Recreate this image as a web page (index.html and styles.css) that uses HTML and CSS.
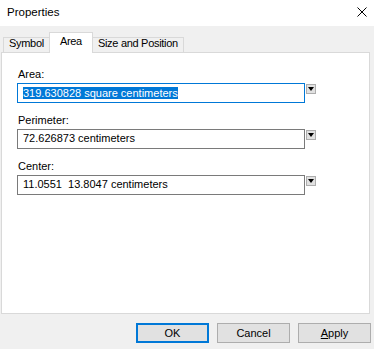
FILE: index.html
```html
<!DOCTYPE html>
<html lang="en">
<head>
    <meta charset="UTF-8">
    <meta name="viewport" content="width=device-width, initial-scale=1.0">
    <title>Properties</title>
    <link rel="stylesheet" href="styles.css">
</head>
<body>
    <div class="window">
        <!-- title bar -->
        <div class="titlebar">
            <span class="title">Properties</span>
            <svg class="close" width="10" height="10" viewBox="0 0 10 10">
                <path d="M0.5 0.5 L9.5 9.5 M9.5 0.5 L0.5 9.5" stroke="#000" stroke-width="1" fill="none"/>
            </svg>
        </div>

        <!-- tabs -->
        <div class="tabs">
            <div class="tab">Symbol</div>
            <div class="tab active">Area</div>
            <div class="tab">Size and Position</div>
        </div>

        <!-- panel with the fields -->
        <div class="panel">
            <div class="field">
                <label>Area:</label>
                <div class="row">
                    <div class="input focused"><span class="selected">319.630828 square centimeters</span></div>
                    <div class="drop"><span class="arrow"></span></div>
                </div>
            </div>
            <div class="field">
                <label>Perimeter:</label>
                <div class="row">
                    <div class="input">72.626873 centimeters</div>
                    <div class="drop"><span class="arrow"></span></div>
                </div>
            </div>
            <div class="field">
                <label>Center:</label>
                <div class="row">
                    <div class="input">11.0551&nbsp; 13.8047 centimeters</div>
                    <div class="drop"><span class="arrow"></span></div>
                </div>
            </div>
        </div>

        <!-- buttons -->
        <div class="buttons">
            <div class="btn default">OK</div>
            <div class="btn">Cancel</div>
            <div class="btn"><u>A</u>pply</div>
        </div>
    </div>
</body>
</html>
```

FILE: styles.css
```css
* {
    padding: 0px;
    margin: 0px;
    box-sizing: border-box;
}
body {
    background-color: #f0f0f0;
    font-family: "Liberation Sans", Arial, sans-serif;
    font-size: 11px;
    color: #000;
}
.window {
    width: 374px;
    height: 349px;
    display: flex;
    flex-direction: column;
}
.titlebar {
    height: 26px;
    background-color: #fff;
    display: flex;
    align-items: center;
    justify-content: space-between;
    padding: 0 7px 3px 7px;
}
.title {
    font-size: 11.5px;
}
.tabs {
    display: flex;
    align-items: flex-end;
    margin-top: 7px;
    padding-left: 3px;
    height: 19px;
    letter-spacing: -0.3px;
}
.tab {
    height: 15px;
    line-height: 11px;
    padding: 0 5px;
    border: 1px solid #d9d9d9;
    border-bottom: none;
    background-color: #f0f0f0;
}
.tab.active {
    height: 21px;
    margin-bottom: -1px;
    padding: 3px 10px 0 10px;
    background-color: #fff;
    position: relative;
    z-index: 1;
}
.tab + .tab.active,
.tab.active + .tab {
    margin-left: -1px;
}
.panel {
    height: 262px;
    margin: 0 4px 0 1px;
    background-color: #fff;
    border: 1px solid #d9d9d9;
    padding: 14px 15px;
    display: flex;
    flex-direction: column;
    gap: 10px;
}
.field label {
    display: block;
    line-height: 15px;
    margin-bottom: 1px;
    padding-left: 1px;
}
.row {
    display: flex;
    align-items: flex-start;
    gap: 1px;
}
.input {
    width: 288px;
    height: 20px;
    border: 1px solid #7a7a7a;
    line-height: 17px;
    padding-left: 5px;
    white-space: nowrap;
}
.input.focused {
    border-color: #0078d7;
}
.selected {
    background-color: #0078d7;
    color: #fff;
    display: inline-block;
    vertical-align: top;
    line-height: 12px;
    margin-top: 3px;
}
.drop {
    width: 10px;
    height: 10px;
    margin-top: 1px;
    background-color: #e1e1e1;
    border: 1px solid #adadad;
    display: flex;
    justify-content: center;
    padding-top: 2px;
}
.arrow {
    width: 0;
    height: 0;
    border-left: 3px solid transparent;
    border-right: 3px solid transparent;
    border-top: 4px solid #000;
}
.buttons {
    display: flex;
    justify-content: flex-end;
    gap: 8px;
    padding: 9px 3px 0 0;
}
.btn {
    width: 73px;
    height: 20px;
    background-color: #e1e1e1;
    border: 1px solid #adadad;
    text-align: center;
    line-height: 18px;
}
.btn.default {
    border: 2px solid #0078d7;
    line-height: 16px;
}
```
